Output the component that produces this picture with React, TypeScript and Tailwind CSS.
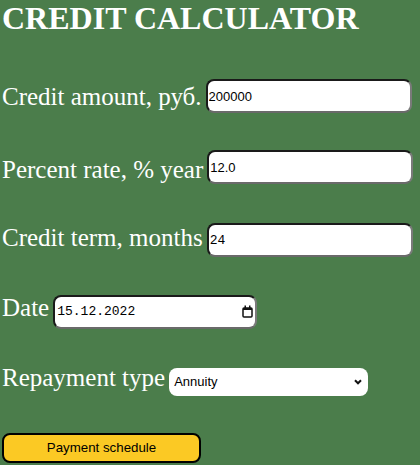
import React from "react";

const inputCls =
  "h-[34px] rounded-[8px] border-2 border-t-[#1a1a1a] border-l-[#1a1a1a] border-r-[#7a7a7a] border-b-[#6a6a6a] bg-white pl-[1px] text-black outline-none";

function Row({
  label,
  children,
  mt,
  h,
  labelCls = "",
}: {
  label: string;
  children: React.ReactNode;
  mt: string;
  h: string;
  labelCls?: string;
}) {
  return (
    <div className={`flex items-center gap-[4px] ${mt} ${h}`}>
      <span className={`text-[25px] leading-[29px] whitespace-nowrap ${labelCls}`}>{label}</span>
      {children}
    </div>
  );
}

export default function App() {
  return (
    <div className="w-[420px] h-[465px] bg-[#4b7d4b] text-white font-['Liberation_Serif',serif] pl-[2px] overflow-hidden">
      <h1 className="text-[32px] font-bold leading-[37px] m-0">CREDIT CALCULATOR</h1>

      <Row label="Credit amount, руб." mt="mt-[42px]" h="h-[34px]">
        <input
          readOnly
          value="200000"
          className={`${inputCls} w-[206px] text-[13px] font-['Liberation_Sans',sans-serif]`}
        />
      </Row>

      <Row label="Percent rate, % year" mt="mt-[37px]" h="h-[34px]" labelCls="mt-[4px]">
        <input
          readOnly
          value="12.0"
          className={`${inputCls} w-[206px] text-[13px] font-['Liberation_Sans',sans-serif]`}
        />
      </Row>

      <Row label="Credit term, months" mt="mt-[39px]" h="h-[34px]" labelCls="mb-[6px]">
        <input
          readOnly
          value="24"
          className={`${inputCls} w-[206px] text-[13px] font-['Liberation_Mono',monospace]`}
        />
      </Row>

      <Row label="Date" mt="mt-[38px]" h="h-[33px]" labelCls="mb-[9px]">
        <div
          className={`${inputCls} h-[33px] w-[204px] flex items-center justify-between pl-[2px] pr-[2px]`}
        >
          <span className="text-[13px] font-['Liberation_Mono',monospace]">15.12.2022</span>
          <svg width="11" height="13" viewBox="0 0 11 13" fill="none">
            <rect x="1" y="3" width="9" height="9" rx="1" stroke="#111" strokeWidth="1.5" />
            <rect x="1" y="3" width="9" height="2" fill="#111" />
            <rect x="2.5" y="0.5" width="1.5" height="3" fill="#111" />
            <rect x="7" y="0.5" width="1.5" height="3" fill="#111" />
          </svg>
        </div>
      </Row>

      <Row label="Repayment type" mt="mt-[40px]" h="h-[28px]" labelCls="mb-[10px]">
        <div className="h-[28px] w-[199px] rounded-[8px] bg-white text-black flex items-center justify-between pl-[5px] pr-[6px]">
          <span className="text-[13px] font-['Liberation_Sans',sans-serif]">Annuity</span>
          <svg width="8" height="6" viewBox="0 0 8 6" fill="none">
            <path d="M1 1.2 L4 4.3 L7 1.2" stroke="#111" strokeWidth="2" />
          </svg>
        </div>
      </Row>

      <div className="mt-[37px]">
        <button className="w-[199px] h-[30px] rounded-[8px] border-2 border-black bg-[#fbc924] text-black text-[13.3px] font-['Liberation_Sans',sans-serif]">
          Payment schedule
        </button>
      </div>
    </div>
  );
}
